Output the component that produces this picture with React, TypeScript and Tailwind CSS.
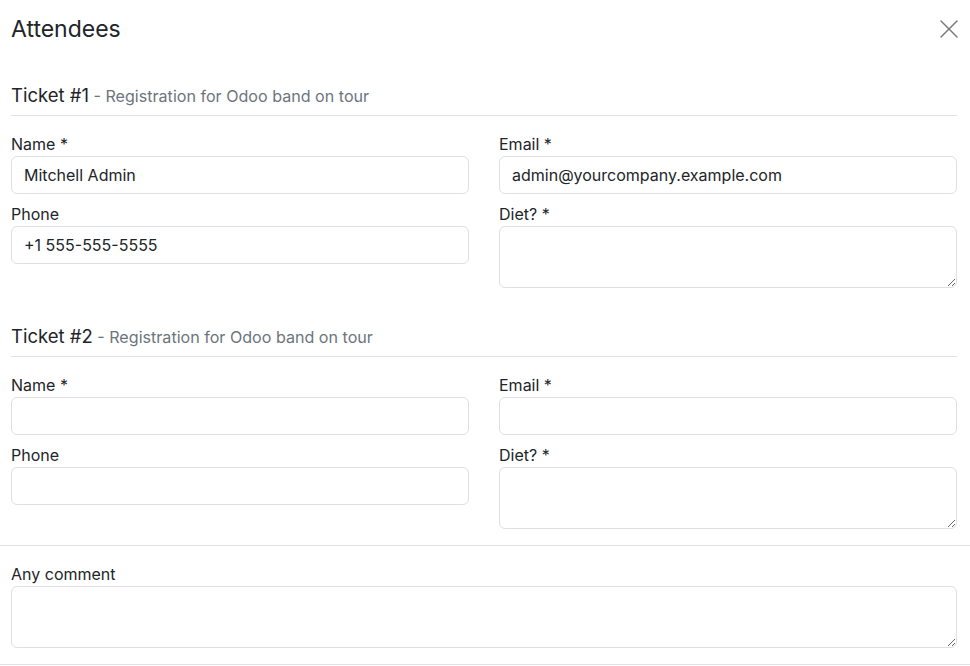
import { X } from 'lucide-react';

const Field = ({ label, value, area }: { label: string; value?: string; area?: boolean }) => (
  <div className="flex flex-col">
    <label className="text-[16px] leading-[20px] text-[#212529] mb-[2px]">{label}</label>
    {area ? (
      <textarea className="h-[62px] w-full rounded-[6px] border border-[#dcdfe3] px-3 py-2 text-[16px] outline-none" />
    ) : (
      <input
        defaultValue={value}
        className="h-[38px] w-full rounded-[6px] border border-[#dcdfe3] px-3 text-[16px] text-[#212529] outline-none"
      />
    )}
  </div>
);

const Ticket = ({ n, name, email, phone }: { n: number; name?: string; email?: string; phone?: string }) => (
  <section>
    <div className="border-b border-[#dee2e6] pb-[5px] leading-[27px]">
      <span className="text-[18.5px] text-[#212529]">Ticket #{n}</span>
      <span className="text-[16.1px] text-[#6c757d]"> - Registration for Odoo band on tour</span>
    </div>
    <div className="mt-[18px] grid grid-cols-2 gap-x-[30px] gap-y-[10px]">
      <Field label="Name *" value={name} />
      <Field label="Email *" value={email} />
      <Field label="Phone" value={phone} />
      <Field label="Diet? *" area />
    </div>
  </section>
);

export default function App() {
  return (
    <div className="w-[970px] h-[666px] overflow-hidden bg-white font-['Inter',sans-serif] text-[#212529]">
      <div className="pl-[11px] pr-[13px]">
        <div className="flex items-center justify-between h-[30px] mt-[14px]">
          <h1 className="text-[23px] leading-[30px] font-normal">Attendees</h1>
          <button className="text-[#7a7a7a] mr-[-8px]" aria-label="Close">
            <X size={32} strokeWidth={1.1} />
          </button>
        </div>
        <div className="mt-[38px]">
          <Ticket n={1} name="Mitchell Admin" email="admin@yourcompany.example.com" phone="+1 555-555-5555" />
        </div>
        <div className="mt-[35px]">
          <Ticket n={2} />
        </div>
      </div>
      <div className="mt-[16px] border-t border-[#dee2e6] px-[11px] pr-[13px] pb-[16px]">
        <div className="mt-[18px]">
          <Field label="Any comment" area />
        </div>
      </div>
      <div className="border-t border-[#dee2e6]" />
    </div>
  );
}
